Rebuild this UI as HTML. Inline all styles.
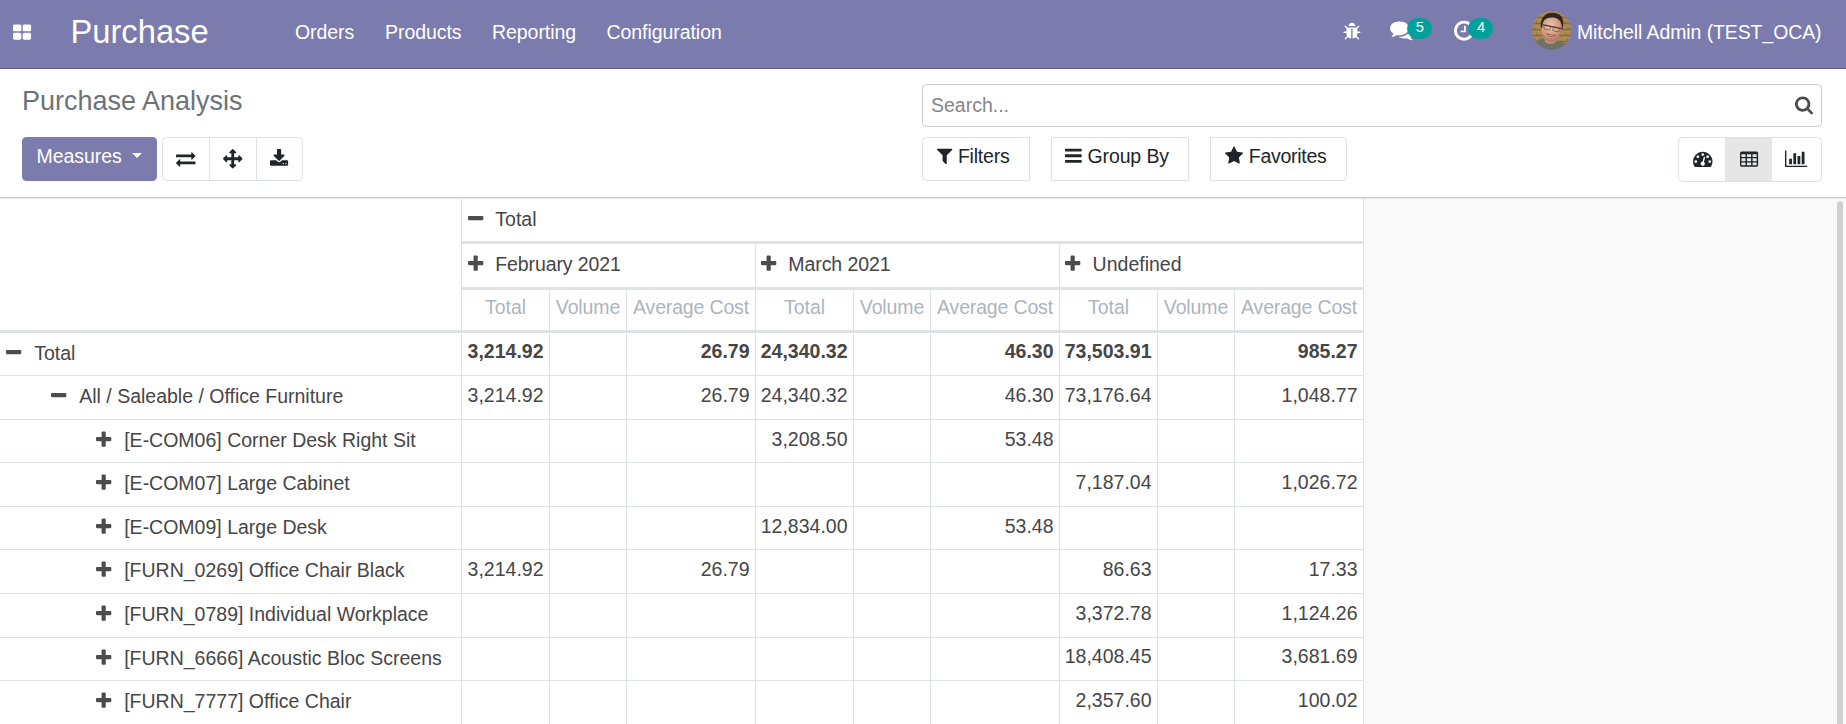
<!DOCTYPE html><html><head><meta charset="utf-8"><title>Purchase Analysis</title><style>
*{box-sizing:border-box}
html,body{margin:0;padding:0}
body{width:1846px;height:724px;overflow:hidden;position:relative;background:#f9f9f9;font-family:"Liberation Sans",Arial,sans-serif;font-size:19.5px;color:#464646;line-height:1.5}
svg.fa{display:inline-block;vertical-align:middle;overflow:visible}
.abs{position:absolute;white-space:nowrap}
#nav{position:absolute;left:0;top:0;width:1846px;height:69px;background:#7c7bad;border-bottom:1px solid #5f5e97;color:#fff}
#nav .t{position:absolute;white-space:nowrap;line-height:1}
#cp{position:absolute;left:0;top:69px;width:1846px;height:129px;background:#fff;border-bottom:1px solid #cccccc}
.btn{position:absolute;border:1px solid #dee2e6;background:#fff;color:#212529;white-space:nowrap}
.hl{position:absolute;background:#dee2e6;height:1px}
.vl{position:absolute;background:#dee2e6;width:1px}
.cell{position:absolute;white-space:nowrap;line-height:1}
.num{text-align:right}
.b{font-weight:bold}
.mh{color:#adb5bd;text-align:center}
</style></head><body>
<div id="nav">
<div class="abs" style="left:13px;top:22.5px;line-height:0"><svg class="fa" style="width:18.11px;height:19.5px;" viewBox="0 0 1664 1792"><path fill="#fff" transform="translate(0,1536) scale(1,-1)" d="M768 512v-384q0 -52 -38 -90t-90 -38h-512q-52 0 -90 38t-38 90v384q0 52 38 90t90 38h512q52 0 90 -38t38 -90zM768 1280v-384q0 -52 -38 -90t-90 -38h-512q-52 0 -90 38t-38 90v384q0 52 38 90t90 38h512q52 0 90 -38t38 -90zM1664 512v-384q0 -52 -38 -90t-90 -38 h-512q-52 0 -90 38t-38 90v384q0 52 38 90t90 38h512q52 0 90 -38t38 -90zM1664 1280v-384q0 -52 -38 -90t-90 -38h-512q-52 0 -90 38t-38 90v384q0 52 38 90t90 38h512q52 0 90 -38t38 -90z"/></svg></div>
<div class="t" style="left:70.5px;top:15.8px;font-size:32.7px">Purchase</div>
<div class="t" style="left:295px;top:23px;font-size:19.5px;letter-spacing:-0.06px">Orders</div>
<div class="t" style="left:385px;top:23px;font-size:19.5px;letter-spacing:-0.06px">Products</div>
<div class="t" style="left:492px;top:23px;font-size:19.5px;letter-spacing:-0.06px">Reporting</div>
<div class="t" style="left:606.5px;top:23px;font-size:19.5px;letter-spacing:-0.06px">Configuration</div>
<div class="abs" style="left:1342.6px;top:22.2px;line-height:0"><svg class="fa" style="width:17.83px;height:19.2px;" viewBox="0 0 1664 1792"><path fill="#fff" transform="translate(0,1536) scale(1,-1)" d="M1632 576q0 -26 -19 -45t-45 -19h-224q0 -171 -67 -290l208 -209q19 -19 19 -45t-19 -45q-18 -19 -45 -19t-45 19l-198 197q-5 -5 -15 -13t-42 -28.5t-65 -36.5t-82 -29t-97 -13v896h-128v-896q-51 0 -101.5 13.5t-87 33t-66 39t-43.5 32.5l-15 14l-183 -207 q-20 -21 -48 -21q-24 0 -43 16q-19 18 -20.5 44.5t15.5 46.5l202 227q-58 114 -58 274h-224q-26 0 -45 19t-19 45t19 45t45 19h224v294l-173 173q-19 19 -19 45t19 45t45 19t45 -19l173 -173h844l173 173q19 19 45 19t45 -19t19 -45t-19 -45l-173 -173v-294h224q26 0 45 -19 t19 -45zM1152 1152h-640q0 133 93.5 226.5t226.5 93.5t226.5 -93.5t93.5 -226.5z"/></svg></div>
<div class="abs" style="left:1390.2px;top:18.3px;line-height:0"><svg class="fa" style="width:24.00px;height:24px;" viewBox="0 0 1792 1792"><path fill="#fff" transform="translate(0,1536) scale(1,-1)" d="M1408 768q0 -139 -94 -257t-256.5 -186.5t-353.5 -68.5q-86 0 -176 16q-124 -88 -278 -128q-36 -9 -86 -16h-3q-11 0 -20.5 8t-11.5 21q-1 3 -1 6.5t0.5 6.5t2 6l2.5 5t3.5 5.5t4 5t4.5 5t4 4.5q5 6 23 25t26 29.5t22.5 29t25 38.5t20.5 44q-124 72 -195 177t-71 224 q0 139 94 257t256.5 186.5t353.5 68.5t353.5 -68.5t256.5 -186.5t94 -257zM1792 512q0 -120 -71 -224.5t-195 -176.5q10 -24 20.5 -44t25 -38.5t22.5 -29t26 -29.5t23 -25q1 -1 4 -4.5t4.5 -5t4 -5t3.5 -5.5l2.5 -5t2 -6t0.5 -6.5t-1 -6.5q-3 -14 -13 -22t-22 -7 q-50 7 -86 16q-154 40 -278 128q-90 -16 -176 -16q-271 0 -472 132q58 -4 88 -4q161 0 309 45t264 129q125 92 192 212t67 254q0 77 -23 152q129 -71 204 -178t75 -230z"/></svg></div>
<div class="abs" style="left:1407px;top:18px;width:25px;height:21px;border-radius:10.5px;background:#00a09d;color:#fff;font-size:14.6px;line-height:14.6px;text-align:center"><span style="position:relative;top:2px;left:.4px">5</span></div>
<div class="abs" style="left:1454.3px;top:19.4px;line-height:0"><svg class="fa" style="width:20.06px;height:23.4px;" viewBox="0 0 1536 1792"><path fill="#fff" transform="translate(0,1536) scale(1,-1)" d="M896 992v-448q0 -14 -9 -23t-23 -9h-320q-14 0 -23 9t-9 23v64q0 14 9 23t23 9h224v352q0 14 9 23t23 9h64q14 0 23 -9t9 -23zM1312 640q0 148 -73 273t-198 198t-273 73t-273 -73t-198 -198t-73 -273t73 -273t198 -198t273 -73t273 73t198 198t73 273zM1536 640 q0 -209 -103 -385.5t-279.5 -279.5t-385.5 -103t-385.5 103t-279.5 279.5t-103 385.5t103 385.5t279.5 279.5t385.5 103t385.5 -103t279.5 -279.5t103 -385.5z"/></svg></div>
<div class="abs" style="left:1468.2px;top:18px;width:25px;height:21px;border-radius:10.5px;background:#00a09d;color:#fff;font-size:14.6px;line-height:14.6px;text-align:center"><span style="position:relative;top:2.2px;left:.4px">4</span></div>
<svg class="abs" style="left:1532px;top:11px" width="39" height="39" viewBox="0 0 39 39"><defs><clipPath id="av"><circle cx="19.5" cy="19.5" r="19.5"/></clipPath><radialGradient id="fg" cx="45%" cy="35%" r="70%"><stop offset="0" stop-color="#ecc4ad"/><stop offset=".6" stop-color="#d39c82"/><stop offset="1" stop-color="#a86a55"/></radialGradient></defs><g clip-path="url(#av)"><rect width="39" height="39" fill="#ad8a54"/><path d="M0 6.5h39M0 12.5h39M0 18.5h39M0 24.5h39M0 30.5h39" stroke="#7a5c36" stroke-width="1.3" opacity=".65"/><path d="M5 9.5v3M33 9.5v3M2 15.5v3M36 15.5v3M5 21.5v3M34 21.5v3M3 27.5v3M35 27.5v3" stroke="#7a5c36" stroke-width="1" opacity=".6"/><path d="M1 39 L4 30 Q9 26.5 13 28 L19 33 L27 30 Q32 31 34 33 L37 39Z" fill="#6c7267"/><path d="M12 24 L13 31 Q17 35 24 31 L26 25Z" fill="#c08c74"/><path d="M9.5 14 Q8.5 24 13.5 28.5 Q18 32 23.5 29.5 Q29 26 29.5 16 Q29 7 20 6 Q11 6.500 9.5 14Z" fill="url(#fg)"/><path d="M8.800 16.500 Q7.500 5.500 16 2.200 Q25 .5 29.500 5.500 Q32.500 10 30.300 19 Q30 13 28.300 10 Q25 6.300 20.500 6.500 Q14.500 6.300 12 9.500 Q10.300 12 10 17Z" fill="#2f2623"/><path d="M9 13.400 L29.800 17.600" stroke="#43332f" stroke-width="1.100" fill="none" opacity=".9"/><rect x="12" y="14.500" width="6.500" height="4" rx="1.300" transform="rotate(11 15 16)" fill="none" stroke="#5a4540" stroke-width=".6"/><rect x="21" y="16.300" width="6.500" height="4" rx="1.300" transform="rotate(11 24 18)" fill="none" stroke="#5a4540" stroke-width=".6"/><path d="M14.500 22.500 Q18.500 27.500 23.500 24.200 Q19 24.600 14.500 22.500Z" fill="#fbf3ee" stroke="#8a4a42" stroke-width=".9"/></g></svg>
<div class="t" style="left:1577px;top:23px;font-size:19.4px;letter-spacing:-0.05px">Mitchell Admin (TEST_OCA)</div>
</div>
<div id="cp">
<div class="abs" style="left:22px;top:19px;font-size:27px;line-height:1;color:#6e7277;transform-origin:0 22.9px;transform:scaleY(1.05)">Purchase Analysis</div>
<div class="abs" style="left:22px;top:68px;width:135px;height:44px;background:#7c7bad;border-radius:4.5px;color:#fff"><span class="abs" style="left:14.5px;top:10.2px;line-height:1;letter-spacing:-0.04px">Measures</span><span class="abs" style="left:109.8px;top:16px;width:0;height:0;border-left:5px solid transparent;border-right:5px solid transparent;border-top:5px solid #fff"></span></div>
<div class="btn" style="left:162px;top:68px;width:141px;height:44px;border-radius:4.5px"></div>
<div class="vl" style="left:209px;top:69px;height:42px"></div><div class="vl" style="left:256px;top:69px;height:42px"></div>
<div class="abs" style="left:176px;top:80px;line-height:0;color:#212529"><svg class="fa" style="width:19.50px;height:19.5px;" viewBox="0 0 1792 1792"><path fill="currentColor" transform="translate(0,1536) scale(1,-1)" d="M1792 352v-192q0 -13 -9.5 -22.5t-22.5 -9.5h-1376v-192q0 -13 -9.5 -22.5t-22.5 -9.5q-12 0 -24 10l-319 320q-9 9 -9 22q0 14 9 23l320 320q9 9 23 9q13 0 22.5 -9.5t9.5 -22.5v-192h1376q13 0 22.5 -9.5t9.5 -22.5zM1792 896q0 -14 -9 -23l-320 -320q-9 -9 -23 -9 q-13 0 -22.5 9.5t-9.5 22.5v192h-1376q-13 0 -22.5 9.5t-9.5 22.5v192q0 13 9.5 22.5t22.5 9.5h1376v192q0 14 9 23t23 9q12 0 24 -10l319 -319q9 -9 9 -23z"/></svg></div>
<div class="abs" style="left:223.3px;top:80px;line-height:0;color:#212529"><svg class="fa" style="width:19.50px;height:19.5px;" viewBox="0 0 1792 1792"><path fill="currentColor" transform="translate(0,1536) scale(1,-1)" d="M1792 640q0 -26 -19 -45l-256 -256q-19 -19 -45 -19t-45 19t-19 45v128h-384v-384h128q26 0 45 -19t19 -45t-19 -45l-256 -256q-19 -19 -45 -19t-45 19l-256 256q-19 19 -19 45t19 45t45 19h128v384h-384v-128q0 -26 -19 -45t-45 -19t-45 19l-256 256q-19 19 -19 45 t19 45l256 256q19 19 45 19t45 -19t19 -45v-128h384v384h-128q-26 0 -45 19t-19 45t19 45l256 256q19 19 45 19t45 -19l256 -256q19 -19 19 -45t-19 -45t-45 -19h-128v-384h384v128q0 26 19 45t45 19t45 -19l256 -256q19 -19 19 -45z"/></svg></div>
<div class="abs" style="left:270.4px;top:80px;line-height:0;color:#212529"><svg class="fa" style="width:18.11px;height:19.5px;" viewBox="0 0 1664 1792"><path fill="currentColor" transform="translate(0,1536) scale(1,-1)" d="M1280 192q0 26 -19 45t-45 19t-45 -19t-19 -45t19 -45t45 -19t45 19t19 45zM1536 192q0 26 -19 45t-45 19t-45 -19t-19 -45t19 -45t45 -19t45 19t19 45zM1664 416v-320q0 -40 -28 -68t-68 -28h-1472q-40 0 -68 28t-28 68v320q0 40 28 68t68 28h465l135 -136 q58 -56 136 -56t136 56l136 136h464q40 0 68 -28t28 -68zM1339 985q17 -41 -14 -70l-448 -448q-18 -19 -45 -19t-45 19l-448 448q-31 29 -14 70q17 39 59 39h256v448q0 26 19 45t45 19h256q26 0 45 -19t19 -45v-448h256q42 0 59 -39z"/></svg></div>
<div class="abs" style="left:922px;top:15px;width:900px;height:43px;border:1px solid #cccccc;border-radius:4.5px;background:#fff"></div>
<div class="abs" style="left:931px;top:26.8px;line-height:1;color:#868686">Search...</div>
<div class="abs" style="left:1795.4px;top:25.5px;line-height:0;color:#4c4c4c"><svg class="fa" style="width:18.11px;height:19.5px;" viewBox="0 0 1664 1792"><path fill="currentColor" transform="translate(0,1536) scale(1,-1)" d="M1152 704q0 185 -131.5 316.5t-316.5 131.5t-316.5 -131.5t-131.5 -316.5t131.5 -316.5t316.5 -131.5t316.5 131.5t131.5 316.5zM1664 -128q0 -52 -38 -90t-90 -38q-54 0 -90 38l-343 342q-179 -124 -399 -124q-143 0 -273.5 55.5t-225 150t-150 225t-55.5 273.5 t55.5 273.5t150 225t225 150t273.5 55.5t273.5 -55.5t225 -150t150 -225t55.5 -273.5q0 -220 -124 -399l343 -343q37 -37 37 -90z"/></svg></div>
<div class="btn" style="left:922px;top:68px;width:108px;height:44px;border-radius:4.5px 0 0 4.5px"></div>
<div class="abs" style="left:936.7px;top:77.3px;line-height:0;color:#212529"><svg class="fa" style="width:15.32px;height:19.5px;" viewBox="0 0 1408 1792"><path fill="currentColor" transform="translate(0,1536) scale(1,-1)" d="M1403 1241q17 -41 -14 -70l-493 -493v-742q0 -42 -39 -59q-13 -5 -25 -5q-27 0 -45 19l-256 256q-19 19 -19 45v486l-493 493q-31 29 -14 70q17 39 59 39h1280q42 0 59 -39z"/></svg></div><div class="abs" style="left:957.9px;top:77.8px;line-height:1;letter-spacing:-0.2px;color:#212529">Filters</div>
<div class="btn" style="left:1051px;top:68px;width:138px;height:44px"></div>
<div class="abs" style="left:1065px;top:77px;line-height:0;color:#212529"><svg class="fa" style="width:16.71px;height:19.5px;" viewBox="0 0 1536 1792"><path fill="currentColor" transform="translate(0,1536) scale(1,-1)" d="M1536 192v-128q0 -26 -19 -45t-45 -19h-1408q-26 0 -45 19t-19 45v128q0 26 19 45t45 19h1408q26 0 45 -19t19 -45zM1536 704v-128q0 -26 -19 -45t-45 -19h-1408q-26 0 -45 19t-19 45v128q0 26 19 45t45 19h1408q26 0 45 -19t19 -45zM1536 1216v-128q0 -26 -19 -45 t-45 -19h-1408q-26 0 -45 19t-19 45v128q0 26 19 45t45 19h1408q26 0 45 -19t19 -45z"/></svg></div><div class="abs" style="left:1087.5px;top:77.8px;line-height:1;letter-spacing:-0.12px;color:#212529">Group By</div>
<div class="btn" style="left:1210px;top:68px;width:137px;height:44px;border-radius:0 4.5px 4.5px 0"></div>
<div class="abs" style="left:1225px;top:77.2px;line-height:0;color:#212529"><svg class="fa" style="width:18.11px;height:19.5px;" viewBox="0 0 1664 1792"><path fill="currentColor" transform="translate(0,1536) scale(1,-1)" d="M1664 889q0 -22 -26 -48l-363 -354l86 -500q1 -7 1 -20q0 -21 -10.5 -35.5t-30.5 -14.5q-19 0 -40 12l-449 236l-449 -236q-22 -12 -40 -12q-21 0 -31.5 14.5t-10.5 35.5q0 6 2 20l86 500l-364 354q-25 27 -25 48q0 37 56 46l502 73l225 455q19 41 49 41t49 -41l225 -455 l502 -73q56 -9 56 -46z"/></svg></div><div class="abs" style="left:1248.8px;top:77.8px;line-height:1;letter-spacing:-0.27px;color:#212529">Favorites</div>
<div class="btn" style="left:1678px;top:68px;width:144px;height:45px;border-radius:4.5px;overflow:hidden"><div class="abs" style="left:46px;top:0;width:47px;height:43px;background:#e6e6e6"></div></div>
<div class="abs" style="left:1693px;top:80.2px;line-height:0;color:#212529"><svg class="fa" style="width:19.50px;height:19.5px;" viewBox="0 0 1792 1792"><path fill="currentColor" transform="translate(0,1536) scale(1,-1)" d="M384 384q0 53 -37.5 90.5t-90.5 37.5t-90.5 -37.5t-37.5 -90.5t37.5 -90.5t90.5 -37.5t90.5 37.5t37.5 90.5zM576 832q0 53 -37.5 90.5t-90.5 37.5t-90.5 -37.5t-37.5 -90.5t37.5 -90.5t90.5 -37.5t90.5 37.5t37.5 90.5zM1004 351l101 382q6 26 -7.5 48.5t-38.5 29.5 t-48 -6.5t-30 -39.5l-101 -382q-60 -5 -107 -43.5t-63 -98.5q-20 -77 20 -146t117 -89t146 20t89 117q16 60 -6 117t-72 91zM1664 384q0 53 -37.5 90.5t-90.5 37.5t-90.5 -37.5t-37.5 -90.5t37.5 -90.5t90.5 -37.5t90.5 37.5t37.5 90.5zM1024 1024q0 53 -37.5 90.5 t-90.5 37.5t-90.5 -37.5t-37.5 -90.5t37.5 -90.5t90.5 -37.5t90.5 37.5t37.5 90.5zM1472 832q0 53 -37.5 90.5t-90.5 37.5t-90.5 -37.5t-37.5 -90.5t37.5 -90.5t90.5 -37.5t90.5 37.5t37.5 90.5zM1792 384q0 -261 -141 -483q-19 -29 -54 -29h-1402q-35 0 -54 29 q-141 221 -141 483q0 182 71 348t191 286t286 191t348 71t348 -71t286 -191t191 -286t71 -348z"/></svg></div>
<div class="abs" style="left:1740px;top:80.8px;line-height:0;color:#212529"><svg class="fa" style="width:18.11px;height:19.5px;" viewBox="0 0 1664 1792"><path fill="currentColor" transform="translate(0,1536) scale(1,-1)" d="M512 160v192q0 14 -9 23t-23 9h-320q-14 0 -23 -9t-9 -23v-192q0 -14 9 -23t23 -9h320q14 0 23 9t9 23zM512 544v192q0 14 -9 23t-23 9h-320q-14 0 -23 -9t-9 -23v-192q0 -14 9 -23t23 -9h320q14 0 23 9t9 23zM1024 160v192q0 14 -9 23t-23 9h-320q-14 0 -23 -9t-9 -23 v-192q0 -14 9 -23t23 -9h320q14 0 23 9t9 23zM512 928v192q0 14 -9 23t-23 9h-320q-14 0 -23 -9t-9 -23v-192q0 -14 9 -23t23 -9h320q14 0 23 9t9 23zM1024 544v192q0 14 -9 23t-23 9h-320q-14 0 -23 -9t-9 -23v-192q0 -14 9 -23t23 -9h320q14 0 23 9t9 23zM1536 160v192 q0 14 -9 23t-23 9h-320q-14 0 -23 -9t-9 -23v-192q0 -14 9 -23t23 -9h320q14 0 23 9t9 23zM1024 928v192q0 14 -9 23t-23 9h-320q-14 0 -23 -9t-9 -23v-192q0 -14 9 -23t23 -9h320q14 0 23 9t9 23zM1536 544v192q0 14 -9 23t-23 9h-320q-14 0 -23 -9t-9 -23v-192 q0 -14 9 -23t23 -9h320q14 0 23 9t9 23zM1536 928v192q0 14 -9 23t-23 9h-320q-14 0 -23 -9t-9 -23v-192q0 -14 9 -23t23 -9h320q14 0 23 9t9 23zM1664 1248v-1088q0 -66 -47 -113t-113 -47h-1344q-66 0 -113 47t-47 113v1088q0 66 47 113t113 47h1344q66 0 113 -47t47 -113 z"/></svg></div>
<div class="abs" style="left:1785.2px;top:80.2px;line-height:0;color:#212529"><svg class="fa" style="width:22.29px;height:19.5px;" viewBox="0 0 2048 1792"><path fill="currentColor" transform="translate(0,1536) scale(1,-1)" d="M640 640v-512h-256v512h256zM1024 1152v-1024h-256v1024h256zM2048 0v-128h-2048v1536h128v-1408h1920zM1408 896v-768h-256v768h256zM1792 1280v-1152h-256v1152h256z"/></svg></div>
</div>
<div class="abs" style="left:0;top:198px;width:1846px;height:1px;background:#e6e6e6;z-index:3"></div>
<div id="pv" class="abs" style="left:0;top:198px;width:1364px;height:526px;background:#fff">
<div class="hl" style="left:461px;top:43px;width:903px;height:3px"></div>
<div class="hl" style="left:461px;top:89px;width:903px;height:3px"></div>
<div class="hl" style="left:0px;top:132px;width:1364px;height:3px"></div>
<div class="hl" style="left:0px;top:177px;width:1364px;height:1px"></div>
<div class="hl" style="left:0px;top:221px;width:1364px;height:1px"></div>
<div class="hl" style="left:0px;top:264px;width:1364px;height:1px"></div>
<div class="hl" style="left:0px;top:308px;width:1364px;height:1px"></div>
<div class="hl" style="left:0px;top:351px;width:1364px;height:1px"></div>
<div class="hl" style="left:0px;top:395px;width:1364px;height:1px"></div>
<div class="hl" style="left:0px;top:439px;width:1364px;height:1px"></div>
<div class="hl" style="left:0px;top:482px;width:1364px;height:1px"></div>
<div class="vl" style="left:461px;top:0px;height:526px"></div>
<div class="vl" style="left:1363px;top:0px;height:526px"></div>
<div class="vl" style="left:755px;top:46px;height:480px"></div>
<div class="vl" style="left:1059px;top:46px;height:480px"></div>
<div class="vl" style="left:549px;top:92px;height:434px"></div>
<div class="vl" style="left:626px;top:92px;height:434px"></div>
<div class="vl" style="left:853px;top:92px;height:434px"></div>
<div class="vl" style="left:930px;top:92px;height:434px"></div>
<div class="vl" style="left:1157px;top:92px;height:434px"></div>
<div class="vl" style="left:1234px;top:92px;height:434px"></div>
<div class="cell" style="left:468px;top:11px;letter-spacing:0px"><svg class="fa" style="width:15.32px;height:19.5px;margin-right:12px;vertical-align:-3px" viewBox="0 0 1408 1792"><path fill="#4c4c4c" transform="translate(0,1536) scale(1,-1)" d="M1408 800v-192q0 -40 -28 -68t-68 -28h-1216q-40 0 -68 28t-28 68v192q0 40 28 68t68 28h1216q40 0 68 -28t28 -68z"/></svg>Total</div>
<div class="cell" style="left:468px;top:56px;letter-spacing:-0.11px"><svg class="fa" style="width:15.32px;height:19.5px;margin-right:12px;vertical-align:-3px" viewBox="0 0 1408 1792"><path fill="#4c4c4c" transform="translate(0,1536) scale(1,-1)" d="M1408 800v-192q0 -40 -28 -68t-68 -28h-416v-416q0 -40 -28 -68t-68 -28h-192q-40 0 -68 28t-28 68v416h-416q-40 0 -68 28t-28 68v192q0 40 28 68t68 28h416v416q0 40 28 68t68 28h192q40 0 68 -28t28 -68v-416h416q40 0 68 -28t28 -68z"/></svg>February 2021</div>
<div class="cell" style="left:761px;top:56px;letter-spacing:-0.08px"><svg class="fa" style="width:15.32px;height:19.5px;margin-right:12px;vertical-align:-3px" viewBox="0 0 1408 1792"><path fill="#4c4c4c" transform="translate(0,1536) scale(1,-1)" d="M1408 800v-192q0 -40 -28 -68t-68 -28h-416v-416q0 -40 -28 -68t-68 -28h-192q-40 0 -68 28t-28 68v416h-416q-40 0 -68 28t-28 68v192q0 40 28 68t68 28h416v416q0 40 28 68t68 28h192q40 0 68 -28t28 -68v-416h416q40 0 68 -28t28 -68z"/></svg>March 2021</div>
<div class="cell" style="left:1065.3px;top:56px;letter-spacing:0px"><svg class="fa" style="width:15.32px;height:19.5px;margin-right:12px;vertical-align:-3px" viewBox="0 0 1408 1792"><path fill="#4c4c4c" transform="translate(0,1536) scale(1,-1)" d="M1408 800v-192q0 -40 -28 -68t-68 -28h-416v-416q0 -40 -28 -68t-68 -28h-192q-40 0 -68 28t-28 68v416h-416q-40 0 -68 28t-28 68v192q0 40 28 68t68 28h416v416q0 40 28 68t68 28h192q40 0 68 -28t28 -68v-416h416q40 0 68 -28t28 -68z"/></svg>Undefined</div>
<div class="cell mh" style="left:462px;width:87px;top:100px;letter-spacing:0px">Total</div>
<div class="cell mh" style="left:550px;width:76px;top:100px;letter-spacing:-0.13px">Volume</div>
<div class="cell mh" style="left:627px;width:128px;top:100px;letter-spacing:-0.16px">Average Cost</div>
<div class="cell mh" style="left:756px;width:97px;top:100px;letter-spacing:0px">Total</div>
<div class="cell mh" style="left:854px;width:76px;top:100px;letter-spacing:-0.13px">Volume</div>
<div class="cell mh" style="left:931px;width:128px;top:100px;letter-spacing:-0.16px">Average Cost</div>
<div class="cell mh" style="left:1060px;width:97px;top:100px;letter-spacing:0px">Total</div>
<div class="cell mh" style="left:1158px;width:76px;top:100px;letter-spacing:-0.13px">Volume</div>
<div class="cell mh" style="left:1235px;width:128px;top:100px;letter-spacing:-0.16px">Average Cost</div>
<div class="cell" style="left:6.4px;top:145px;letter-spacing:0px"><svg class="fa" style="width:15.32px;height:19.5px;margin-right:12.5px;vertical-align:-3px" viewBox="0 0 1408 1792"><path fill="#4c4c4c" transform="translate(0,1536) scale(1,-1)" d="M1408 800v-192q0 -40 -28 -68t-68 -28h-1216q-40 0 -68 28t-28 68v192q0 40 28 68t68 28h1216q40 0 68 -28t28 -68z"/></svg>Total</div>
<div class="cell num b" style="left:462px;width:87px;padding-right:5.5px;top:144px">3,214.92</div>
<div class="cell num b" style="left:627px;width:128px;padding-right:5.5px;top:144px">26.79</div>
<div class="cell num b" style="left:756px;width:97px;padding-right:5.5px;top:144px">24,340.32</div>
<div class="cell num b" style="left:931px;width:128px;padding-right:5.5px;top:144px">46.30</div>
<div class="cell num b" style="left:1060px;width:97px;padding-right:5.5px;top:144px">73,503.91</div>
<div class="cell num b" style="left:1235px;width:128px;padding-right:5.5px;top:144px">985.27</div>
<div class="cell" style="left:51.4px;top:188px;letter-spacing:0px"><svg class="fa" style="width:15.32px;height:19.5px;margin-right:12.5px;vertical-align:-3px" viewBox="0 0 1408 1792"><path fill="#4c4c4c" transform="translate(0,1536) scale(1,-1)" d="M1408 800v-192q0 -40 -28 -68t-68 -28h-1216q-40 0 -68 28t-28 68v192q0 40 28 68t68 28h1216q40 0 68 -28t28 -68z"/></svg>All / Saleable / Office Furniture</div>
<div class="cell num" style="left:462px;width:87px;padding-right:5.5px;top:188px">3,214.92</div>
<div class="cell num" style="left:627px;width:128px;padding-right:5.5px;top:188px">26.79</div>
<div class="cell num" style="left:756px;width:97px;padding-right:5.5px;top:188px">24,340.32</div>
<div class="cell num" style="left:931px;width:128px;padding-right:5.5px;top:188px">46.30</div>
<div class="cell num" style="left:1060px;width:97px;padding-right:5.5px;top:188px">73,176.64</div>
<div class="cell num" style="left:1235px;width:128px;padding-right:5.5px;top:188px">1,048.77</div>
<div class="cell" style="left:96.4px;top:232px;letter-spacing:0px"><svg class="fa" style="width:15.32px;height:19.5px;margin-right:12.5px;vertical-align:-3px" viewBox="0 0 1408 1792"><path fill="#4c4c4c" transform="translate(0,1536) scale(1,-1)" d="M1408 800v-192q0 -40 -28 -68t-68 -28h-416v-416q0 -40 -28 -68t-68 -28h-192q-40 0 -68 28t-28 68v416h-416q-40 0 -68 28t-28 68v192q0 40 28 68t68 28h416v416q0 40 28 68t68 28h192q40 0 68 -28t28 -68v-416h416q40 0 68 -28t28 -68z"/></svg>[E-COM06] Corner Desk Right Sit</div>
<div class="cell num" style="left:756px;width:97px;padding-right:5.5px;top:232px">3,208.50</div>
<div class="cell num" style="left:931px;width:128px;padding-right:5.5px;top:232px">53.48</div>
<div class="cell" style="left:96.4px;top:275px;letter-spacing:0px"><svg class="fa" style="width:15.32px;height:19.5px;margin-right:12.5px;vertical-align:-3px" viewBox="0 0 1408 1792"><path fill="#4c4c4c" transform="translate(0,1536) scale(1,-1)" d="M1408 800v-192q0 -40 -28 -68t-68 -28h-416v-416q0 -40 -28 -68t-68 -28h-192q-40 0 -68 28t-28 68v416h-416q-40 0 -68 28t-28 68v192q0 40 28 68t68 28h416v416q0 40 28 68t68 28h192q40 0 68 -28t28 -68v-416h416q40 0 68 -28t28 -68z"/></svg>[E-COM07] Large Cabinet</div>
<div class="cell num" style="left:1060px;width:97px;padding-right:5.5px;top:275px">7,187.04</div>
<div class="cell num" style="left:1235px;width:128px;padding-right:5.5px;top:275px">1,026.72</div>
<div class="cell" style="left:96.4px;top:319px;letter-spacing:0px"><svg class="fa" style="width:15.32px;height:19.5px;margin-right:12.5px;vertical-align:-3px" viewBox="0 0 1408 1792"><path fill="#4c4c4c" transform="translate(0,1536) scale(1,-1)" d="M1408 800v-192q0 -40 -28 -68t-68 -28h-416v-416q0 -40 -28 -68t-68 -28h-192q-40 0 -68 28t-28 68v416h-416q-40 0 -68 28t-28 68v192q0 40 28 68t68 28h416v416q0 40 28 68t68 28h192q40 0 68 -28t28 -68v-416h416q40 0 68 -28t28 -68z"/></svg>[E-COM09] Large Desk</div>
<div class="cell num" style="left:756px;width:97px;padding-right:5.5px;top:319px">12,834.00</div>
<div class="cell num" style="left:931px;width:128px;padding-right:5.5px;top:319px">53.48</div>
<div class="cell" style="left:96.4px;top:362px;letter-spacing:0px"><svg class="fa" style="width:15.32px;height:19.5px;margin-right:12.5px;vertical-align:-3px" viewBox="0 0 1408 1792"><path fill="#4c4c4c" transform="translate(0,1536) scale(1,-1)" d="M1408 800v-192q0 -40 -28 -68t-68 -28h-416v-416q0 -40 -28 -68t-68 -28h-192q-40 0 -68 28t-28 68v416h-416q-40 0 -68 28t-28 68v192q0 40 28 68t68 28h416v416q0 40 28 68t68 28h192q40 0 68 -28t28 -68v-416h416q40 0 68 -28t28 -68z"/></svg>[FURN_0269] Office Chair Black</div>
<div class="cell num" style="left:462px;width:87px;padding-right:5.5px;top:362px">3,214.92</div>
<div class="cell num" style="left:627px;width:128px;padding-right:5.5px;top:362px">26.79</div>
<div class="cell num" style="left:1060px;width:97px;padding-right:5.5px;top:362px">86.63</div>
<div class="cell num" style="left:1235px;width:128px;padding-right:5.5px;top:362px">17.33</div>
<div class="cell" style="left:96.4px;top:406px;letter-spacing:0px"><svg class="fa" style="width:15.32px;height:19.5px;margin-right:12.5px;vertical-align:-3px" viewBox="0 0 1408 1792"><path fill="#4c4c4c" transform="translate(0,1536) scale(1,-1)" d="M1408 800v-192q0 -40 -28 -68t-68 -28h-416v-416q0 -40 -28 -68t-68 -28h-192q-40 0 -68 28t-28 68v416h-416q-40 0 -68 28t-28 68v192q0 40 28 68t68 28h416v416q0 40 28 68t68 28h192q40 0 68 -28t28 -68v-416h416q40 0 68 -28t28 -68z"/></svg>[FURN_0789] Individual Workplace</div>
<div class="cell num" style="left:1060px;width:97px;padding-right:5.5px;top:406px">3,372.78</div>
<div class="cell num" style="left:1235px;width:128px;padding-right:5.5px;top:406px">1,124.26</div>
<div class="cell" style="left:96.4px;top:450px;letter-spacing:0px"><svg class="fa" style="width:15.32px;height:19.5px;margin-right:12.5px;vertical-align:-3px" viewBox="0 0 1408 1792"><path fill="#4c4c4c" transform="translate(0,1536) scale(1,-1)" d="M1408 800v-192q0 -40 -28 -68t-68 -28h-416v-416q0 -40 -28 -68t-68 -28h-192q-40 0 -68 28t-28 68v416h-416q-40 0 -68 28t-28 68v192q0 40 28 68t68 28h416v416q0 40 28 68t68 28h192q40 0 68 -28t28 -68v-416h416q40 0 68 -28t28 -68z"/></svg>[FURN_6666] Acoustic Bloc Screens</div>
<div class="cell num" style="left:1060px;width:97px;padding-right:5.5px;top:449px">18,408.45</div>
<div class="cell num" style="left:1235px;width:128px;padding-right:5.5px;top:449px">3,681.69</div>
<div class="cell" style="left:96.4px;top:493px;letter-spacing:0px"><svg class="fa" style="width:15.32px;height:19.5px;margin-right:12.5px;vertical-align:-3px" viewBox="0 0 1408 1792"><path fill="#4c4c4c" transform="translate(0,1536) scale(1,-1)" d="M1408 800v-192q0 -40 -28 -68t-68 -28h-416v-416q0 -40 -28 -68t-68 -28h-192q-40 0 -68 28t-28 68v416h-416q-40 0 -68 28t-28 68v192q0 40 28 68t68 28h416v416q0 40 28 68t68 28h192q40 0 68 -28t28 -68v-416h416q40 0 68 -28t28 -68z"/></svg>[FURN_7777] Office Chair</div>
<div class="cell num" style="left:1060px;width:97px;padding-right:5.5px;top:493px">2,357.60</div>
<div class="cell num" style="left:1235px;width:128px;padding-right:5.5px;top:493px">100.02</div>
</div>
<div class="abs" style="left:1837px;top:201px;width:6px;height:530px;border-radius:3px;background:#d0d0d0"></div>
</body></html>
